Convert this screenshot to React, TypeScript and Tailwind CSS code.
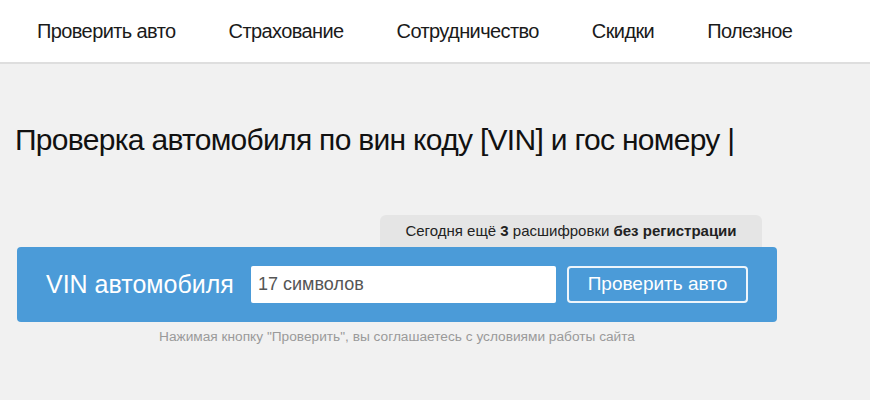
import React from 'react'

const nav = ['Проверить авто', 'Страхование', 'Сотрудничество', 'Скидки', 'Полезное']

export default function App() {
  return (
    <div className="min-h-[400px] bg-[#f1f1f1] text-[#111]" style={{ fontFamily: '"Liberation Sans", Arial, sans-serif' }}>
      <header className="h-[64px] bg-white border-b-2 border-[#dedede]">
        <nav className="flex items-center h-full pl-[37px] gap-[53px]">
          {nav.map(item => (
            <a key={item} className="text-[20px] text-[#1a1a1a] tracking-[-0.6px]">
              {item}
            </a>
          ))}
        </nav>
      </header>

      <main className="px-[15px]">
        <h1 className="mt-[56px] text-[30px] leading-[40px] tracking-[-0.7px]">
          Проверка автомобиля по вин коду [VIN] и гос номеру |
        </h1>

        <div className="mt-[55px] ml-[2px] w-[760px]">
          <div className="flex justify-end pr-[15px]">
            <div className="w-[382px] h-[32px] bg-[#e5e5e5] rounded-t-[6px] flex items-center justify-center text-[15px] text-[#222]">
              Сегодня ещё&nbsp;<b>3</b>&nbsp;расшифровки&nbsp;<b>без регистрации</b>
            </div>
          </div>
          <div className="h-[75px] bg-[#4b9bd8] rounded-[4px] flex items-center pl-[29px] pr-[29px]">
            <span className="text-white text-[25px] w-[205px]">VIN автомобиля</span>
            <input
              className="w-[305px] h-[37px] bg-white rounded-[2px] px-[7px] text-[18px] text-[#444] placeholder:text-[#555] outline-none"
              placeholder="17 символов"
            />
            <button className="ml-[11px] w-[181px] h-[37px] border-2 border-white/90 rounded-[4px] text-white text-[19px]">
              Проверить авто
            </button>
          </div>
          <p className="mt-[5px] text-center text-[13.7px] text-[#9a9a9a]">
            Нажимая кнопку "Проверить", вы соглашаетесь с условиями работы сайта
          </p>
        </div>
      </main>
    </div>
  )
}
